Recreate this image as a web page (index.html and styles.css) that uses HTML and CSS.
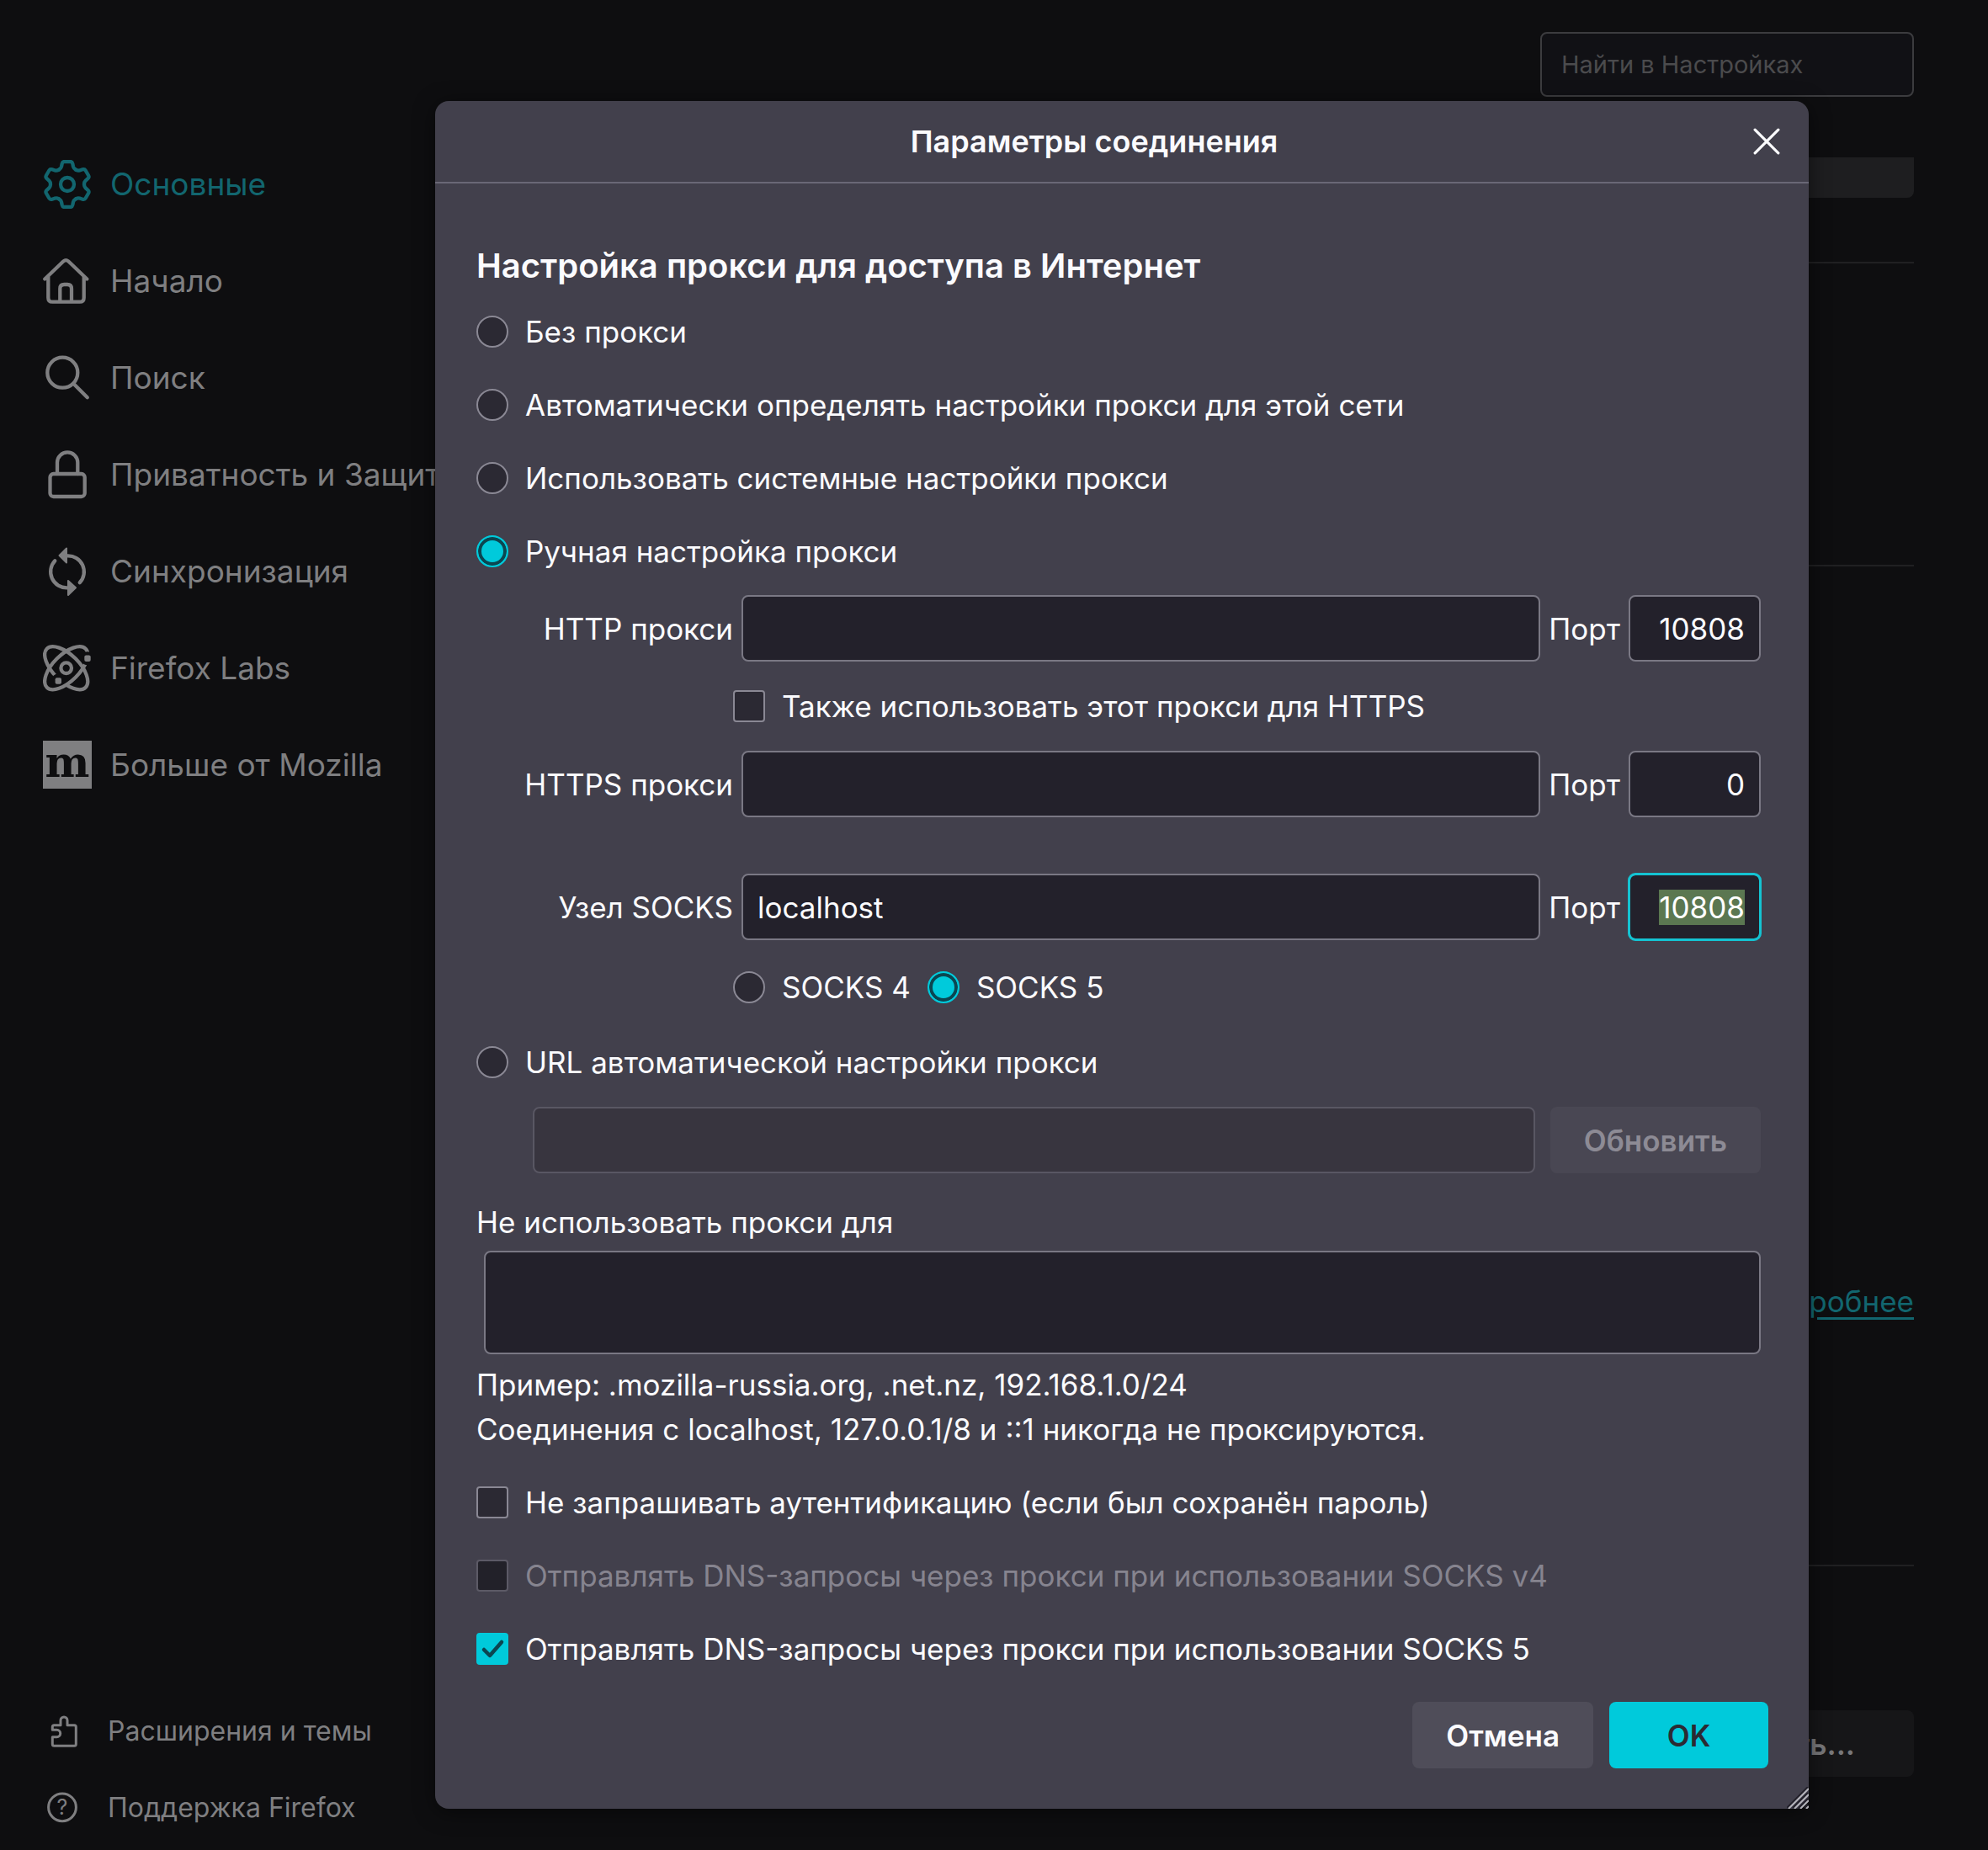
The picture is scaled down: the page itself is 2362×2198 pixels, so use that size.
FILE: index.html
```
<!doctype html>
<html lang="ru">
  <head>
    <meta charset="UTF-8" />
    <meta name="viewport" content="width=device-width, initial-scale=1.0" />
    <title>Настройки</title>
    <link rel="stylesheet" href="styles.css">
  </head>
  <body>
    <div class="page">
      <aside class="sidebar">
        <nav class="categories">
          <a href="#general" class="category selected">
            <svg class="icon" viewBox="0 0 58 58">
              <defs>
                <path id="tooth" d="M-10-17.3C-8-18.5-7.4-19.5-7-21L-6.3-24.5Q-5.7-27-3.5-27H3.5Q5.7-27 6.3-24.5L7-21C7.4-19.5 8-18.5 10-17.3" />
              </defs>
              <g transform="translate(29 29)">
                <use href="#tooth" />
                <use href="#tooth" transform="rotate(60)" />
                <use href="#tooth" transform="rotate(120)" />
                <use href="#tooth" transform="rotate(180)" />
                <use href="#tooth" transform="rotate(240)" />
                <use href="#tooth" transform="rotate(300)" />
                <circle r="8" />
              </g>
            </svg>
            Основные
          </a>
          <a href="#home" class="category">
            <svg class="icon" viewBox="0 0 58 58">
              <path d="M2.3 26.5L24.5 5.3Q27.3 3 30.1 5.3L52.3 26.5M6.3 24V48.7Q6.3 53.7 11.3 53.7H43.7Q48.7 53.7 48.7 48.7V24M20.3 53.7V38Q20.3 33 25.3 33H29Q34 33 34 38V53.7" />
            </svg>
            Начало
          </a>
          <a href="#search" class="category">
            <svg class="icon" viewBox="0 0 58 58">
              <circle cx="23.3" cy="22.7" r="18" />
              <path d="M36.3 35.7L52.8 52.2" />
            </svg>
            Поиск
          </a>
          <a href="#privacy" class="category">
            <svg class="icon" viewBox="0 0 58 58">
              <rect x="8.5" y="28" width="41.2" height="27" rx="4" />
              <path d="M17 28V14.5a12.1 12.1 0 0 1 24.3 0V28" />
            </svg>
            Приватность и Защита
          </a>
          <a href="#sync" class="category">
            <svg class="icon" viewBox="0 0 58 58">
              <path d="M29 10.3A19 19 0 0 1 43.7 42.3M14.3 16.3A19 19 0 0 0 29 48.3" />
              <path class="solid" d="M19.5 10L28 1.5V18.5ZM39 48.3L30 40V57Z" />
            </svg>
            Синхронизация
          </a>
          <a href="#labs" class="category">
            <svg class="icon" viewBox="0 0 58 58">
              <defs>
                <mask id="gapLeft" maskUnits="userSpaceOnUse" x="-5" y="-5" width="68" height="68">
                  <rect class="mask-on" x="-5" y="-5" width="68" height="68" />
                  <circle class="mask-off" cx="19" cy="44" r="9" />
                </mask>
                <mask id="gapRight" maskUnits="userSpaceOnUse" x="-5" y="-5" width="68" height="68">
                  <rect class="mask-on" x="-5" y="-5" width="68" height="68" />
                  <circle class="mask-off" cx="53" cy="17.3" r="8" />
                </mask>
              </defs>
              <g mask="url(#gapLeft)">
                <ellipse cx="27.7" cy="28.7" rx="32.5" ry="15.7" transform="rotate(45 27.7 28.7)" />
              </g>
              <g mask="url(#gapRight)">
                <ellipse cx="27.7" cy="28.7" rx="32.5" ry="15.7" transform="rotate(-45 27.7 28.7)" />
              </g>
              <circle cx="27.7" cy="28.7" r="6.3" />
              <rect class="electron" x="49.3" y="13.6" width="7.4" height="7.4" rx="2" />
              <rect class="electron" x="14.6" y="40.3" width="7.4" height="7.4" rx="2" />
            </svg>
            Firefox Labs
          </a>
          <a href="#more" class="category">
            <svg class="icon" viewBox="0 0 58 58">
              <rect class="tile" width="58" height="57" />
              <text class="tile-letter" x="29" y="43" text-anchor="middle">m</text>
            </svg>
            Больше от Mozilla
          </a>
        </nav>
        <div class="side-links">
          <a href="#addons" class="side-link">
            <svg class="icon small" viewBox="0 0 38 38">
              <path d="M16 11.7V6a4 4 0 0 1 8 0V11.7H32.3q2 0 2 2V34.3q0 2-2 2H8.3q-2 0-2-2V25.7H11.5a4.2 4.2 0 0 0 0-8.4H6.3V13.7q0-2 2-2z" />
            </svg>
            Расширения и темы
          </a>
          <a href="#help" class="side-link">
            <svg class="icon small" viewBox="0 0 38 38">
              <circle cx="18" cy="18.3" r="16.4" />
              <text class="help-mark" x="18" y="27" text-anchor="middle">?</text>
            </svg>
            Поддержка Firefox
          </a>
        </div>
      </aside>

      <main class="content">
        <input type="search" class="search" placeholder="Найти в Настройках" aria-label="Найти в Настройках" />
        <div class="banner"></div>
        <section class="group group-first"></section>
        <section class="group group-middle">
          <a href="#learn" class="learn-more">Подробнее</a>
        </section>
        <section class="group group-last">
          <button class="settings-button">Настроить...</button>
        </section>
      </main>
    </div>

    <div class="overlay">
      <div class="dialog" role="dialog" aria-labelledby="dialogTitle">
        <header class="dialog-header">
          <h1 id="dialogTitle">Параметры соединения</h1>
          <button class="close" aria-label="Закрыть">
            <svg viewBox="0 0 30 30"><path d="M2 2L28 28M28 2L2 28" /></svg>
          </button>
        </header>

        <form class="dialog-body">
          <h2>Настройка прокси для доступа в Интернет</h2>

          <div class="options">
            <label class="option"><input type="radio" name="mode" /> Без прокси</label>
            <label class="option"><input type="radio" name="mode" /> Автоматически определять настройки прокси для этой сети</label>
            <label class="option"><input type="radio" name="mode" /> Использовать системные настройки прокси</label>
            <label class="option"><input type="radio" name="mode" checked /> Ручная настройка прокси</label>
          </div>

          <div class="proxy-grid">
            <label class="host-label" for="http">HTTP прокси</label>
            <input type="text" class="field" id="http" />
            <label class="port-label" for="httpPort">Порт</label>
            <input type="text" class="field port" id="httpPort" value="10808" />

            <div class="under-host">
              <label class="option"><input type="checkbox" /> Также использовать этот прокси для HTTPS</label>
            </div>

            <label class="host-label" for="https">HTTPS прокси</label>
            <input type="text" class="field" id="https" />
            <label class="port-label" for="httpsPort">Порт</label>
            <input type="text" class="field port" id="httpsPort" value="0" />
          </div>

          <div class="proxy-grid socks">
            <label class="host-label" for="socks">Узел SOCKS</label>
            <input type="text" class="field" id="socks" value="localhost" />
            <label class="port-label" for="socksPort">Порт</label>
            <input type="text" class="field port" id="socksPort" value="10808" />

            <div class="under-host">
              <label class="option"><input type="radio" name="socks" /> SOCKS 4</label>
              <label class="option"><input type="radio" name="socks" checked /> SOCKS 5</label>
            </div>
          </div>

          <label class="option auto-option"><input type="radio" name="mode" /> URL автоматической настройки прокси</label>
          <div class="auto-row">
            <input type="text" class="field" aria-label="URL автоматической настройки прокси" disabled />
            <button type="button" class="button" disabled>Обновить</button>
          </div>

          <label class="bypass-label" for="bypass">Не использовать прокси для</label>
          <textarea class="field bypass" id="bypass"></textarea>
          <p class="hint">Пример: .mozilla-russia.org, .net.nz, 192.168.1.0/24</p>
          <p class="hint">Соединения с localhost, 127.0.0.1/8 и ::1 никогда не проксируются.</p>

          <div class="options checks">
            <label class="option"><input type="checkbox" /> Не запрашивать аутентификацию (если был сохранён пароль)</label>
            <label class="option disabled"><input type="checkbox" disabled /> Отправлять DNS-запросы через прокси при использовании SOCKS v4</label>
            <label class="option"><input type="checkbox" checked /> Отправлять DNS-запросы через прокси при использовании SOCKS 5</label>
          </div>
        </form>

        <footer class="dialog-footer">
          <button class="button cancel">Отмена</button>
          <button class="button primary">OK</button>
        </footer>
        <svg class="resizer" viewBox="0 0 26 26">
          <path class="groove" d="M0 25L25 0M7 25L25 7M14 25L25 14M21 25L25 21" />
          <path d="M2 26L26 2M9 26L26 9M16 26L26 16M23 26L26 23" />
        </svg>
      </div>
    </div>

    <script>
      const socksPort = document.getElementById('socksPort')
      socksPort.focus({ preventScroll: true })
      socksPort.select()
    </script>
  </body>
</html>
```

FILE: styles.css
```
* {
  box-sizing: border-box;
}
body {
  margin: 0;
  background-color: #0e0e10;
  color: #fbfbfe;
  font-family: Inter, "Open Sans", sans-serif;
  font-size: 35px;
  line-height: 48px;
}
button,
input,
textarea {
  font: inherit;
  color: inherit;
}
.page {
  display: flex;
  min-height: 100vh;
}

/* sidebar */
.sidebar {
  display: flex;
  flex-direction: column;
  justify-content: space-between;
  width: 517px;
  padding: 190px 0 31px 51px;
  white-space: nowrap;
}
.categories {
  display: flex;
  flex-direction: column;
  gap: 57px;
}
.category,
.side-link {
  display: flex;
  align-items: center;
  color: #7f7f81;
  text-decoration: none;
}
.category {
  gap: 22px;
  height: 58px;
  font-size: 37px;
}
.selected {
  color: #12666f;
}
.side-links {
  display: flex;
  flex-direction: column;
  gap: 53px;
  padding-left: 5px;
}
.side-link {
  gap: 34px;
  height: 38px;
  font-size: 32px;
}
.icon {
  flex: none;
  width: 58px;
  height: 58px;
  fill: none;
  stroke: currentColor;
  stroke-width: 4.3;
  stroke-linecap: round;
  stroke-linejoin: round;
}
.icon.small {
  width: 38px;
  height: 38px;
  stroke-width: 3;
}
.icon .solid {
  fill: currentColor;
  stroke-width: 2;
}
.icon .electron {
  fill: currentColor;
  stroke: none;
}
.icon .mask-on {
  fill: #fff;
  stroke: none;
}
.icon .mask-off {
  fill: #000;
  stroke: none;
}
.icon .tile {
  fill: currentColor;
  stroke: none;
}
.icon .tile-letter {
  fill: #0e0e10;
  stroke: none;
  font-family: "DejaVu Serif", serif;
  font-weight: bold;
  font-size: 50px;
}
.icon .help-mark {
  fill: currentColor;
  stroke: none;
  font-size: 25px;
}

/* settings behind the dialog */
.content {
  display: flex;
  flex: 1;
  flex-direction: column;
  padding: 38px 88px 0 0;
}
.search {
  align-self: flex-end;
  width: 444px;
  height: 77px;
  padding: 0 23px;
  border: 2px solid #3c3c3f;
  border-radius: 8px;
  background-color: #111115;
  font-size: 29px;
}
.search::placeholder {
  color: #4b4b4d;
}
.banner {
  height: 48px;
  margin: 72px 0 76px;
  border-radius: 0 0 8px 8px;
  background-color: #1e1e20;
}
.group {
  display: flex;
  flex-direction: column;
  align-items: flex-end;
  border-top: 2px solid #202022;
}
.group-first {
  height: 360px;
}
.group-middle {
  height: 1188px;
  padding-top: 849px;
}
.group-last {
  padding-top: 171px;
}
.learn-more {
  color: #12666f;
  text-underline-offset: 6px;
}
.settings-button {
  height: 79px;
  padding: 0 70px;
  border: none;
  border-radius: 8px;
  background-color: #161618;
  color: #77777a;
  font-weight: 600;
}

/* connection dialog */
.overlay {
  position: absolute;
  top: 0;
  left: 0;
  display: flex;
  justify-content: center;
  width: 100%;
  padding: 120px 0 50px 304px;
}
.dialog {
  position: relative;
  width: 100%;
  max-width: 1632px;
  border-radius: 16px;
  background-color: #42404c;
  box-shadow: 0 4px 24px rgba(0, 0, 0, 0.5);
}
.dialog-header {
  display: flex;
  align-items: center;
  height: 98px;
  padding-right: 34px;
  border-bottom: 2px solid #6a6876;
}
.dialog-header h1 {
  flex: 1;
  margin: 0;
  font-size: 36px;
  font-weight: 600;
  text-align: center;
}
.close {
  width: 32px;
  height: 32px;
  padding: 0;
  border: none;
  background: none;
}
.close svg {
  display: block;
  width: 32px;
  height: 32px;
  fill: none;
  stroke: currentColor;
  stroke-width: 3;
  stroke-linecap: round;
}
.dialog-body {
  padding: 70px 57px 0 49px;
}
.dialog-body h2 {
  margin: 0 0 31px;
  font-size: 40px;
  font-weight: 600;
  line-height: 56px;
}
.options {
  display: flex;
  flex-direction: column;
  gap: 49px;
}
.option {
  display: flex;
  align-items: center;
  gap: 20px;
  height: 38px;
}
.option input {
  flex: none;
  width: 38px;
  height: 38px;
  margin: 0;
  appearance: none;
  border: 2px solid #8a8894;
  background-color: #2b2933;
}
.option input[type="radio"] {
  border-radius: 50%;
}
.option input[type="checkbox"] {
  border-radius: 4px;
}
.option input[type="radio"]:checked {
  border-color: #00cadb;
  background-color: #00cadb;
  box-shadow: inset 0 0 0 4px #0b4651;
}
.option input[type="checkbox"]:checked {
  border-color: #00cadb;
  background: #00cadb url("data:image/svg+xml,%3Csvg xmlns='http://www.w3.org/2000/svg' viewBox='0 0 34 34'%3E%3Cpath d='M7 18L14 25L28 9' fill='none' stroke='%230b4651' stroke-width='4.5' stroke-linecap='round' stroke-linejoin='round'/%3E%3C/svg%3E") center;
}
.option.disabled {
  color: #86848f;
}
.option.disabled input {
  border-color: #5c5a66;
  background-color: #222129;
}
.field {
  min-width: 0;
  height: 79px;
  padding: 0 17px;
  border: 2px solid #7a7884;
  border-radius: 8px;
  background-color: #23212b;
}
.field:focus {
  outline: 3px solid #14c3d2;
  outline-offset: -2px;
  border-color: #14c3d2;
}
.field::selection {
  background-color: rgba(92, 120, 82, 0.99);
  color: #fff;
}
.field:disabled {
  border-color: #595763;
  background-color: #38353f;
}
.port {
  text-align: right;
}
.proxy-grid {
  display: grid;
  grid-template-columns: 248px 1fr auto 167px;
  row-gap: 34px;
  align-items: center;
  margin-top: 33px;
  padding-left: 57px;
}
.proxy-grid .field,
.port-label {
  margin-left: 10px;
}
.host-label {
  text-align: right;
  white-space: nowrap;
}
.under-host {
  display: flex;
  gap: 20px;
  grid-column: 2 / -1;
}
.socks {
  row-gap: 37px;
  margin-top: 67px;
}
.auto-option {
  margin-top: 51px;
}
.auto-row {
  display: flex;
  gap: 18px;
  margin: 34px 0;
  padding-left: 67px;
}
.auto-row .field {
  flex: 1;
}
.button {
  height: 79px;
  padding: 0 40px;
  border: none;
  border-radius: 8px;
  background-color: #4f4d59;
  font-weight: 600;
}
.button:disabled {
  background-color: #494753;
  color: #8d8b95;
}
.bypass-label {
  display: block;
}
.bypass {
  display: block;
  width: calc(100% - 9px);
  height: 123px;
  margin: 10px 0 10px 9px;
  resize: none;
}
.hint {
  margin: 0;
  line-height: 53px;
}
.checks {
  margin-top: 41px;
}
.dialog-footer {
  display: flex;
  justify-content: flex-end;
  gap: 19px;
  padding: 44px 48px 48px;
}
.primary {
  min-width: 189px;
  background-color: #00cadb;
  color: #2b2a33;
}
.resizer {
  position: absolute;
  right: 0;
  bottom: 0;
  width: 26px;
  height: 26px;
  stroke: #b5b4bb;
  stroke-width: 2;
}
.resizer .groove {
  stroke: #23212b;
}
```
